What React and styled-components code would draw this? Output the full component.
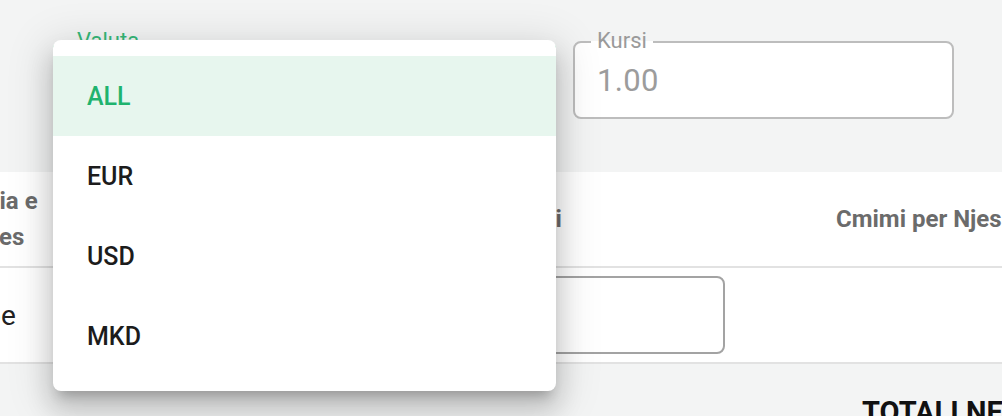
import React from "react";
import styled, { createGlobalStyle } from "styled-components";

const GlobalStyle = createGlobalStyle`
  html, body {
    margin: 0;
    padding: 0;
    background: #f3f4f4;
    font-family: Roboto, "Liberation Sans", Arial, sans-serif;
    overflow: hidden;
  }
`;

const Page = styled.div`
  position: relative;
  width: 1002px;
  height: 416px;
  overflow: hidden;
  padding-top: 41px;
  box-sizing: border-box;
`;

const FormRow = styled.div`
  display: flex;
  gap: 17px;
  padding-left: 53px;
`;

const Field = styled.div`
  position: relative;
  width: ${(p) => p.$width}px;
  height: 78px;
  box-sizing: border-box;
  border: 2px solid ${(p) => (p.$focused ? "#2bb673" : "#bdbdbd")};
  border-radius: 8px;
  background: #fff;
  display: flex;
  align-items: center;
  padding-left: 22px;
`;

const Label = styled.span`
  position: absolute;
  top: -16px;
  left: 16px;
  padding: 0 6px;
  font-size: 22px;
  line-height: 28px;
  color: ${(p) => (p.$focused ? "#36b878" : "#9a9a9a")};
  background: linear-gradient(to bottom, #f3f4f4 50%, #fff 50%);
`;

const Value = styled.span`
  font-size: 31px;
  color: ${(p) => p.$color || "#9c9c9c"};
  letter-spacing: 0.3px;
`;

const Table = styled.div`
  margin-top: 53px;
  margin-left: -60px;
  width: 1160px;
  background: #fff;
`;

const Row = styled.div`
  display: grid;
  grid-template-columns: 130px 366px 309px 1fr;
  height: 96px;
  border-bottom: 2px solid #e2e2e2;
  box-sizing: border-box;
  align-items: center;
`;

const HeadCell = styled.div`
  padding-left: ${(p) => p.$pad ?? 16}px;
  font-size: 24px;
  line-height: 36px;
  font-weight: 700;
  color: #6b6b6b;
  white-space: nowrap;
`;

const Cell = styled.div`
  padding-left: ${(p) => p.$pad ?? 16}px;
  padding-right: 20px;
  font-size: 28px;
  color: #222;
`;

const CellInput = styled.div`
  height: 78px;
  box-sizing: border-box;
  border: 2px solid #a3a3a3;
  border-radius: 8px;
  background: #fff;
`;

const Totals = styled.div`
  display: flex;
  padding-left: 862px;
  margin-top: 31px;
`;

const TotalLabel = styled.span`
  font-size: 29px;
  font-weight: 700;
  color: #111;
  white-space: nowrap;
`;

const Menu = styled.ul`
  position: absolute;
  top: 40px;
  left: 53px;
  width: 503px;
  height: 351px;
  margin: 0;
  padding: 16px 0 0;
  list-style: none;
  box-sizing: border-box;
  background: #fff;
  border-radius: 8px;
  box-shadow: 0 10px 12px -6px rgba(0, 0, 0, 0.22),
    0 18px 26px 3px rgba(0, 0, 0, 0.14), 0 8px 40px 10px rgba(0, 0, 0, 0.1);
`;

const MenuItem = styled.li`
  height: 80px;
  display: flex;
  align-items: center;
  padding-left: 34px;
  font-size: 25px;
  font-weight: 500;
  color: ${(p) => (p.$selected ? "#1fb36e" : "#1c1c1c")};
  background: ${(p) => (p.$selected ? "#e7f6ee" : "transparent")};
`;

const currencies = ["ALL", "EUR", "USD", "MKD"];

export default function App() {
  return (
    <>
      <GlobalStyle />
      <Page>
        <FormRow>
          <Field $width={503} $focused>
            <Label $focused>Valuta</Label>
            <Value $color="#222">ALL</Value>
          </Field>
          <Field $width={381}>
            <Label>Kursi</Label>
            <Value>1.00</Value>
          </Field>
        </FormRow>

        <Table>
          <Row>
            <HeadCell $pad={11}>
              Njesia e
              <br />
              matjes
            </HeadCell>
            <HeadCell>Artikulli</HeadCell>
            <HeadCell $pad={8}>Pershkrimi</HeadCell>
            <HeadCell $pad={91}>Cmimi per Njesine</HeadCell>
          </Row>
          <Row>
            <Cell $pad={11}>Cope</Cell>
            <Cell>
              <CellInput />
            </Cell>
            <Cell>
              <CellInput />
            </Cell>
            <Cell />
          </Row>
        </Table>

        <Totals>
          <TotalLabel>TOTALI NETO</TotalLabel>
        </Totals>

        <Menu>
          {currencies.map((c) => (
            <MenuItem key={c} $selected={c === "ALL"}>
              {c}
            </MenuItem>
          ))}
        </Menu>
      </Page>
    </>
  );
}
